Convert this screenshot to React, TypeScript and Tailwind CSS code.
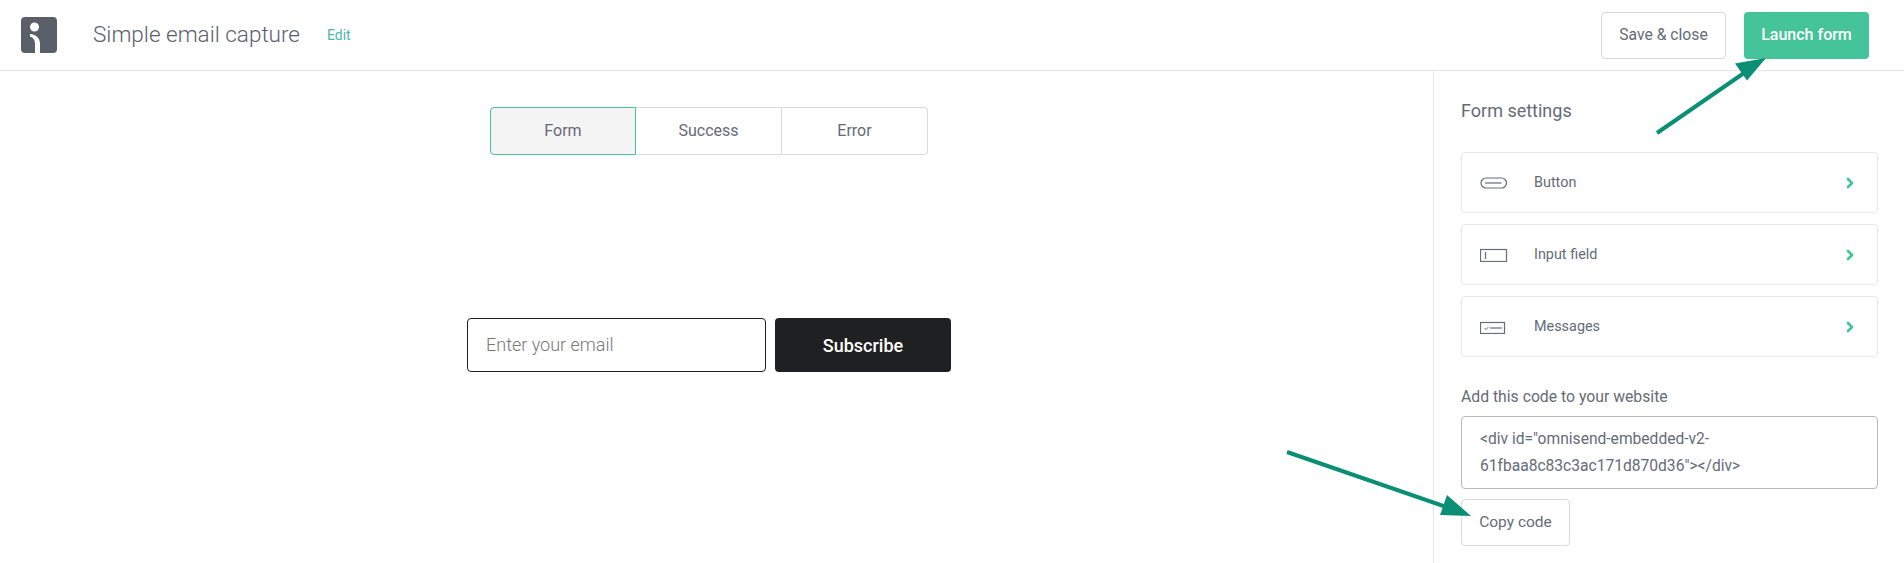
import { ChevronRight } from 'lucide-react';

function Logo() {
  return (
    <svg width="36" height="36" viewBox="0 0 36 36" className="shrink-0">
      <rect width="36" height="36" rx="4" fill="#596069" />
      <circle cx="13.5" cy="10" r="4.5" fill="#fff" />
      <path d="M9 19.500c3.500 1 5 3.500 5 7.500v9h5v-9c0-6-4-9.500-10-10z" fill="#fff" />
    </svg>
  );
}

function ButtonIcon() {
  return (
    <svg width="28" height="14" viewBox="0 0 28 14" fill="none" stroke="#666c78" strokeWidth="1.200">
      <rect x="1" y="2" width="25.500" height="10" rx="5" />
      <path d="M5 7h16.500" />
    </svg>
  );
}

function InputIcon() {
  return (
    <svg width="28" height="14" viewBox="0 0 28 14" fill="none" stroke="#666c78" strokeWidth="1.200">
      <rect x="0.500" y="1.500" width="26" height="12" />
      <path d="M5.500 4v7" />
    </svg>
  );
}

function MessagesIcon() {
  return (
    <svg width="28" height="14" viewBox="0 0 28 14" fill="none" stroke="#666c78" strokeWidth="1.200">
      <rect x="0.500" y="2.500" width="24" height="11" />
      <path d="M4.500 8l1.500 1.500L8.500 7" strokeWidth="1" />
      <path d="M10 8h12" />
    </svg>
  );
}

const settings = [
  { label: 'Button', icon: <ButtonIcon /> },
  { label: 'Input field', icon: <InputIcon /> },
  { label: 'Messages', icon: <MessagesIcon /> },
];

export default function App() {
  return (
    <div className="relative h-[563px] overflow-hidden bg-white font-['Roboto',sans-serif] text-[#656b76]">
      <header className="flex h-[71px] items-center border-b border-[#e6e6e6] pl-[21px] pr-[35px]">
        <Logo />
        <h1 className="ml-[36px] text-[22.500px] font-light text-[#5a616d]">Simple email capture</h1>
        <a className="ml-[27px] text-[14px] text-[#4db6ac]">Edit</a>
        <div className="ml-auto flex gap-[18px]">
          <button className="h-[47px] w-[125px] rounded-[4px] border border-[#d8d8da] text-[15.700px] text-[#656b76]">
            Save &amp; close
          </button>
          <button className="h-[47px] w-[125px] rounded-[4px] bg-[#44c498] text-[16px] font-medium text-white">
            Launch form
          </button>
        </div>
      </header>

      <div className="flex h-[492px]">
        <main className="flex flex-1 flex-col items-center pr-[15px] pt-[36px]">
          <div className="flex h-[48px] w-[438px] text-[16px]">
            <div className="flex w-[146px] items-center justify-center rounded-l-[4px] border border-[#44c498] bg-[#f4f4f4]">
              Form
            </div>
            <div className="flex w-[146px] items-center justify-center border-y border-r border-[#dadada]">
              Success
            </div>
            <div className="flex w-[146px] items-center justify-center rounded-r-[4px] border-y border-r border-[#dadada]">
              Error
            </div>
          </div>

          <form className="mt-[163px] flex gap-[9px]">
            <input
              placeholder="Enter your email"
              className="h-[54px] w-[299px] rounded-[4px] border border-[#1f2022] px-[18px] pb-[2px] text-[18px] font-light outline-none placeholder:text-[#777]"
            />
            <button
              type="button"
              className="h-[54px] w-[176px] rounded-[4px] bg-[#1f2022] text-[18px] font-medium text-white"
            >
              Subscribe
            </button>
          </form>
        </main>

        <aside className="w-[471px] border-l border-[#e6e6e6] pl-[27px] pr-[26px] pt-[28px]">
          <h2 className="text-[18px] leading-6">Form settings</h2>
          <div className="mt-[29px] flex flex-col gap-[11px]">
            {settings.map((item) => (
              <div
                key={item.label}
                className="flex h-[61px] items-center rounded-[4px] border border-[#e8e8e8] pl-[18px] pr-[19px]"
              >
                <span className="flex w-[54px]">{item.icon}</span>
                <span className="text-[14.400px]">{item.label}</span>
                <ChevronRight className="ml-auto h-4 w-4 text-[#44c498]" strokeWidth={4} />
              </div>
            ))}
          </div>
          <label className="mt-[30px] block text-[15.750px] leading-5">Add this code to your website</label>
          <textarea
            readOnly
            value={'<div id="omnisend-embedded-v2-61fbaa8c83c3ac171d870d36"></div>'}
            className="mt-[9px] block h-[73px] w-full resize-none overflow-hidden rounded-[4px] border border-[#b8b8bc] px-[18px] py-[9px] text-[15.600px] leading-[27px] outline-none"
          />
          <button className="mt-[10px] h-[47px] w-[109px] rounded-[4px] border border-[#dadada] text-[15.500px]">
            Copy code
          </button>
        </aside>
      </div>

      <svg className="pointer-events-none absolute left-0 top-0" width="1904" height="563" fill="none">
        <path d="M1657 133L1752 67.500" stroke="#0a8f74" strokeWidth="4" />
        <path d="M1766 58l-31 5.500 12 17z" fill="#0a8f74" />
        <path d="M1287 452L1452 509" stroke="#0a8f74" strokeWidth="4" />
        <path d="M1471 516l-24-21-7 20z" fill="#0a8f74" />
      </svg>
    </div>
  );
}
